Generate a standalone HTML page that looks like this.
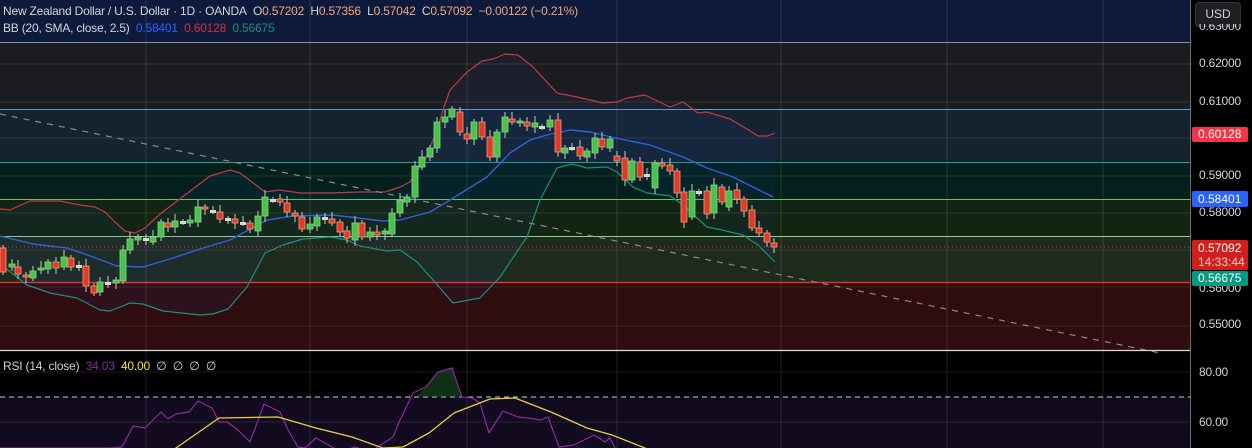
<!DOCTYPE html>
<html><head><meta charset="utf-8">
<style>
html,body{margin:0;padding:0;background:#000;width:1252px;height:448px;overflow:hidden;font-family:"Liberation Sans",sans-serif;}
#c{position:absolute;left:0;top:0}
.t{position:absolute;font-size:12px;color:#d1d4dc;white-space:nowrap;letter-spacing:-0.2px}
</style></head><body>
<svg id="c" width="1252" height="448" xmlns="http://www.w3.org/2000/svg"></svg>
<div class="t" style="left:3px;top:4px">New Zealand Dollar / U.S. Dollar · 1D · OANDA&nbsp; O<span style="color:#f5a57c">0.57202</span>&nbsp; H<span style="color:#f5a57c">0.57356</span>&nbsp; L<span style="color:#f5a57c">0.57042</span>&nbsp; C<span style="color:#f5a57c">0.57092</span>&nbsp; <span style="color:#f5a57c">−0.00122 (−0.21%)</span></div>
<div class="t" style="left:3px;top:21px">BB (20, SMA, close, 2.5)&nbsp; <span style="color:#2962ff">0.58401</span>&nbsp; <span style="color:#d2303f">0.60128</span>&nbsp; <span style="color:#13917c">0.56675</span></div>
<div class="t" style="left:3px;top:359px">RSI (14, close)&nbsp; <span style="color:#8e2aa0">34.03</span>&nbsp; <span style="color:#f0e040">40.00</span>&nbsp; ∅&nbsp; ∅&nbsp; ∅&nbsp; ∅</div>
<script>
var s=document.getElementById('c'),h='';
function R(x,y,w,hh,f){h+='<rect x="'+x+'" y="'+y+'" width="'+w+'" height="'+hh+'" fill="'+f+'"/>';}
function L(x1,y1,x2,y2,c,w,d){h+='<line x1="'+x1+'" y1="'+y1+'" x2="'+x2+'" y2="'+y2+'" stroke="'+c+'" stroke-width="'+(w||1)+'"'+(d?' stroke-dasharray="'+d+'"':'')+'/>';}
function P(pts,c,w,fill){h+='<polyline points="'+pts.map(function(p){return p.join(',')}).join(' ')+'" fill="'+(fill||'none')+'" stroke="'+c+'" stroke-width="'+(w||1)+'" stroke-linejoin="round"/>';}
// backgrounds
R(0,0,1190,42,'#0d1a3c');
R(0,42,1190,67,'#1b1c1f');
R(0,109,1190,53,'#152331');
R(0,162,1190,37,'#03201c');
R(0,199,1190,37,'#142412');
R(0,236,1190,46,'#1e2a1c');
R(0,282,1190,68,'#2e0c0f');
R(0,350,1190,47,'#000');
R(0,397,1190,51,'#120a1e');
// grid
[64,102,138,176,213,250,287,326].forEach(function(y){L(0,y,1190,y,'rgba(255,255,255,0.1)');});
[372,422].forEach(function(y){L(0,y,1190,y,'rgba(255,255,255,0.1)');});
[146,310,467,617,781,947,1103].forEach(function(x){L(x,0,x,448,'rgba(255,255,255,0.12)');});
// level lines
L(0,42.5,1190,42.5,'#8a92aa');L(0,109.5,1190,109.5,'#5aa0d8');L(0,162.5,1190,162.5,'#26a08a');
L(0,199.5,1190,199.5,'#6cbf6c');L(0,236.5,1190,236.5,'#8ed08a');L(0,282.5,1190,282.5,'#e03030',1.5);
// BB
var up=[[0,209],[10,210],[30,201],[60,201],[80,205],[95,207],[105,212],[115,222],[125,231],[135,233],[145,228],[160,214],[185,195],[210,176],[230,170],[240,173],[265,192],[280,190],[300,193],[330,193],[360,192],[385,192],[400,187],[410,182],[425,160],[437,130],[443,110],[450,90],[467,72],[482,61],[493,59],[505,54],[518,55],[533,67],[557,93],[577,97],[603,103],[617,102],[627,98],[645,95],[670,107],[683,102],[698,113],[707,112],[730,119],[747,129],[758,136],[767,136],[775,133]];
var mid=[[0,236],[33,244],[67,248],[93,257],[117,266],[143,267],[173,258],[200,249],[230,240],[267,220],[293,216],[333,215],[383,221],[400,220],[430,212],[450,200],[487,177],[510,153],[530,140],[547,135],[570,130],[590,132],[620,139],[650,145],[683,157],[707,168],[733,177],[753,187],[773,197]];
var lo=[[0,264],[27,285],[50,293],[77,298],[100,310],[110,311],[130,303],[143,304],[163,311],[200,315],[213,314],[228,309],[247,287],[265,253],[283,245],[303,239],[330,237],[347,240],[360,246],[387,251],[400,250],[417,262],[433,280],[453,303],[480,298],[500,277],[527,237],[540,200],[557,168],[572,164],[587,168],[607,167],[617,172],[633,187],[647,193],[670,196],[683,205],[697,218],[707,227],[722,230],[743,235],[758,245],[775,262]];
h+='<polygon points="'+up.concat(lo.slice().reverse()).map(function(p){return p.join(',')}).join(' ')+'" fill="rgba(41,98,255,0.06)"/>';
P(up,'#c03a45',1.2);P(mid,'#2f62d8',1.4);P(lo,'#1e8f7a',1.2);
// trend line
L(0,114,1160,353,'#8a8a8a',1.2,'6,6');
// last price dotted
L(0,247,1190,247,'#d03030',1,'1,3');
// candles [x,open,close]
var cd=[[3,248,272],[12,267,264],[18,267,274],[26,275,277],[33,278,271],[41,270,268],[48,269,262],[56,262,268],[64,267,257],[71,258,267],[79,266,266],[86,266,286],[94,286,293],[100,292,282],[108,283,283],[116,283,280],[123,281,250],[130,250,239],[138,240,237],[146,239,239],[153,242,237],[161,237,222],[168,223,227],[175,227,221],[183,222,222],[190,223,220],[198,222,207],[205,207,209],[213,211,211],[220,212,219],[228,219,219],[235,219,223],[243,223,223],[250,223,229],[258,231,216],[265,216,197],[273,200,200],[280,199,202],[287,203,212],[295,213,216],[302,217,229],[310,229,224],[317,226,217],[325,218,218],[332,219,223],[340,222,232],[347,231,238],[355,240,223],[362,223,237],[370,237,232],[377,232,235],[385,234,231],[392,234,213],[400,213,200],[407,202,197],[415,197,166],[422,167,157],[430,157,148],[437,148,122],[445,122,117],[452,117,109],[460,112,132],[467,134,139],[474,139,122],[482,122,137],[490,137,157],[497,157,132],[505,132,117],[512,119,122],[520,123,121],[527,122,126],[535,127,123],[542,127,127],[550,127,120],[558,120,152],[565,153,148],[572,148,148],[580,147,156],[587,157,151],[595,153,138],[602,139,147],[610,148,139],[617,156,161],[625,158,180],[632,180,161],[640,162,177],[647,175,175],[655,188,163],[662,163,166],[670,165,171],[677,171,193],[684,192,222],[692,217,191],[699,192,192],[707,191,214],[714,213,185],[722,187,202],[729,207,191],[737,190,199],[744,199,211],[752,210,228],[759,228,233],[767,233,242],[774,243,247]];
cd.forEach(function(c,i){var x=c[0],o=c[1],cl=c[2],g=cl<o,col=g?'#4cbf4c':(o==cl?'#e0e0e0':'#e03a2a'),bd=g?'#7be07b':'#f0a070';
var t=Math.min(o,cl),b=Math.max(o,cl);var wt=t-3-(i%3)*2,wb=b+3+(i%4);
L(x,wt,x,wb,'#c8c8c8',1);
if(b-t<2){R(x-3,t-1,6,3,o==cl?'#d8d8d8':'#f0a070');}else{h+='<rect x="'+(x-3)+'" y="'+t+'" width="6" height="'+(b-t)+'" fill="'+col+'" stroke="'+bd+'" stroke-width="0.8"/>';}});
// RSI
L(0,397,1190,397,'#cfcfcf',1,'5,4');
var rsi=[[0,448],[110,448],[122,447],[133,426],[145,428],[161,412],[168,419],[176,414],[189,412],[198,401],[212,408],[219,422],[227,422],[237,429],[250,442],[264,404],[280,412],[288,430],[298,447],[305,448],[316,438],[332,447],[340,452],[355,447],[370,452],[393,437],[400,420],[413,393],[426,387],[438,372],[452,368],[462,397],[472,398],[480,403],[489,433],[503,411],[518,417],[528,418],[541,420],[548,417],[559,447],[574,445],[594,435],[605,442],[610,438],[615,448],[620,455]];
h+='<polygon points="415,397 426,387 438,372 452,368 461,397" fill="rgba(40,140,60,0.35)"/>';
P(rsi,'#8e2aa0',1.2);
P([[170,452],[176,448],[219,418],[278,417],[316,428],[352,437],[383,448],[403,447],[429,433],[454,413],[490,399],[515,398],[551,412],[587,428],[612,435],[645,448],[650,452]],'#e8d040',1.3);
// separator + axis
L(0,350.5,1252,350.5,'#d8d8d8',1.2);
R(1191,0,61,448,'#000');
L(1190.5,0,1190.5,448,'#6a6a6a');
s.innerHTML=h;
</script>
<div style="position:absolute;left:1195px;top:2px;width:44px;height:23px;background:#1e1f22;border:1px solid #333;border-radius:4px;color:#d1d4dc;font-size:12px;line-height:23px;text-align:center">USD</div>
<div class="t" style="left:1199px;top:24px;height:7px;overflow:hidden;line-height:4px">0.63000</div>
<div class="t" style="left:1199px;top:56px">0.62000</div>
<div class="t" style="left:1199px;top:94px">0.61000</div>
<div class="t" style="left:1199px;top:168px">0.59000</div>
<div class="t" style="left:1199px;top:205px">0.58000</div>
<div class="t" style="left:1199px;top:281px">0.56000</div>
<div class="t" style="left:1199px;top:317px">0.55000</div>
<div class="t" style="left:1199px;top:365px">80.00</div>
<div class="t" style="left:1199px;top:415px">60.00</div>
<div style="position:absolute;left:1192px;top:127px;width:56px;height:15px;background:#f23645;border-radius:2px;color:#fff;font-size:12px;line-height:15px;padding-left:6px;box-sizing:border-box;font-family:'Liberation Sans'">0.60128</div>
<div style="position:absolute;left:1192px;top:191px;width:56px;height:16px;background:#2962ff;border-radius:2px;color:#fff;font-size:12px;line-height:16px;padding-left:6px;box-sizing:border-box;font-family:'Liberation Sans'">0.58401</div>
<div style="position:absolute;left:1192px;top:240px;width:56px;height:30px;background:#d41e1e;border-radius:2px;color:#fff;font-size:12px;line-height:14px;padding-left:6px;padding-top:1px;box-sizing:border-box;font-family:'Liberation Sans'">0.57092<br><span style="color:#f4c8c8">14:33:44</span></div>
<div style="position:absolute;left:1192px;top:271px;width:56px;height:15px;background:#089981;border-radius:2px;color:#fff;font-size:12px;line-height:15px;padding-left:6px;box-sizing:border-box;font-family:'Liberation Sans'">0.56675</div>
</body></html>
